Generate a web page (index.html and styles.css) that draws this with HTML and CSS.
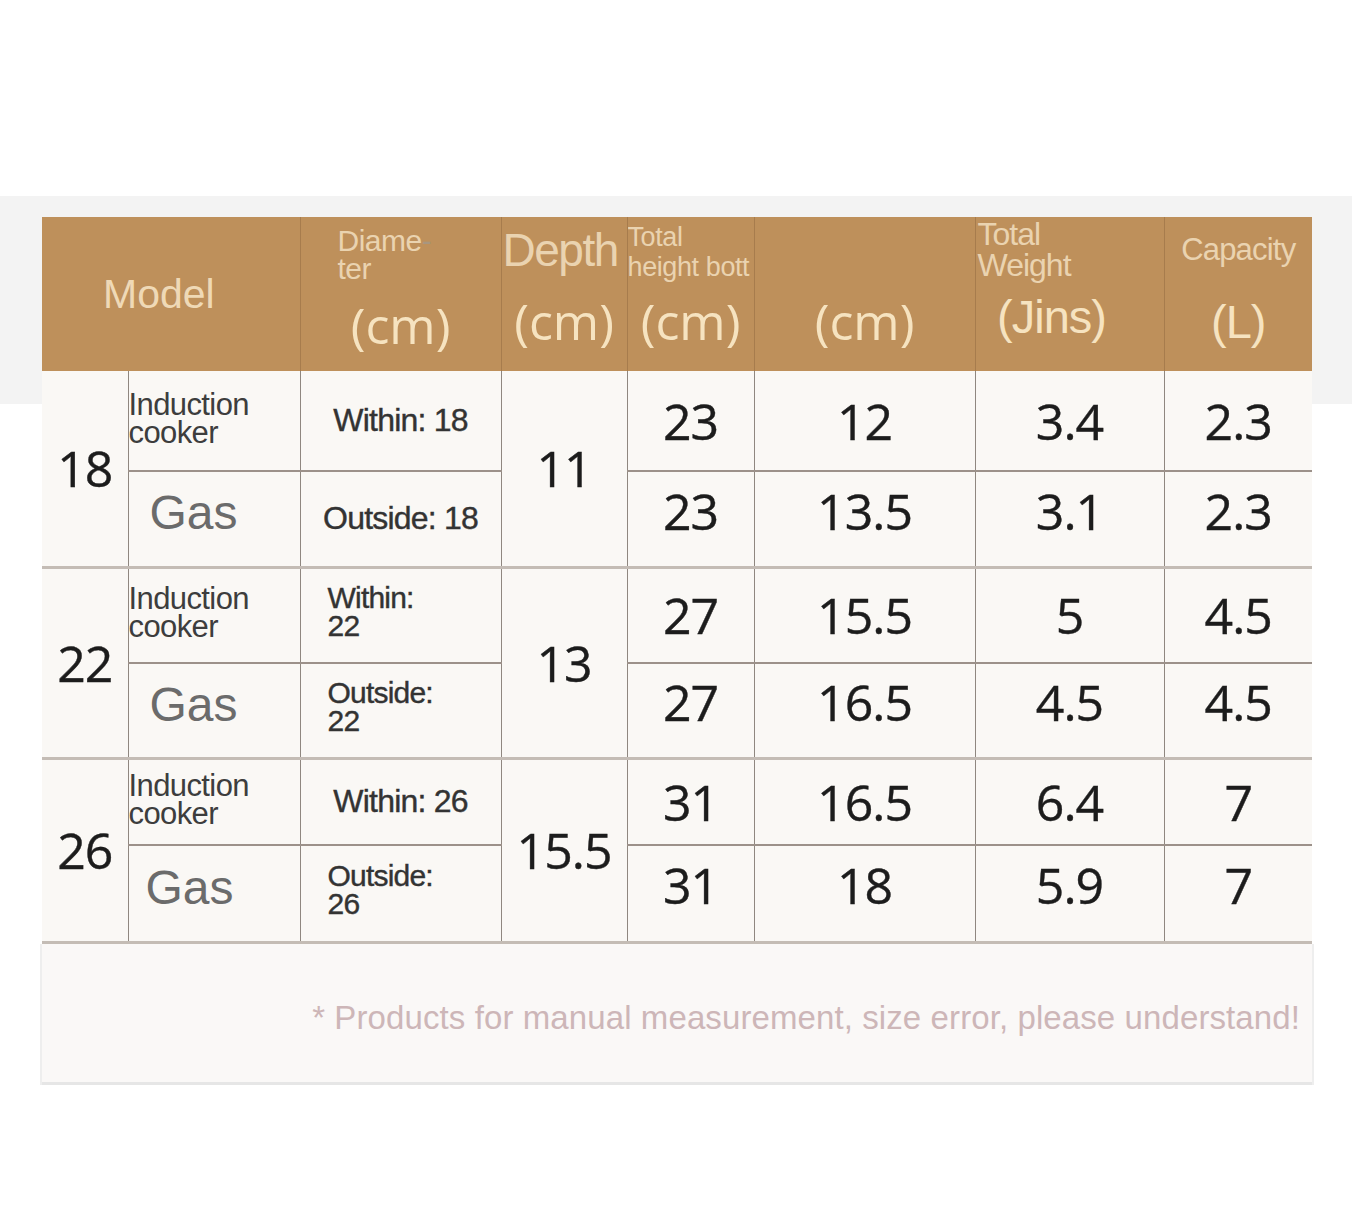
FILE: index.html
```html
<!DOCTYPE html>
<html lang="en">
<head>
<meta charset="utf-8">
<title>Size chart</title>
<link rel="stylesheet" href="styles.css">
</head>
<body>
<main class="sheet">
  <table class="chart">
    <colgroup>
      <col class="c-num"><col class="c-stove"><col class="c-diam"><col class="c-depth">
      <col class="c-total"><col class="c-bottom"><col class="c-weight"><col class="c-cap">
    </colgroup>
    <thead>
      <tr class="head">
        <th colspan="2" class="h-model">Model</th>
        <th class="h-diam"><div class="lbl lbl-diam">Diame<span class="smudge">-</span><br>ter</div><div class="unit">(cm)</div></th>
        <th class="h-depth"><div class="lbl lbl-depth">Depth</div><div class="unit">(cm)</div></th>
        <th class="h-total"><div class="lbl lbl-total">Total<br>height bott</div><div class="unit">(cm)</div></th>
        <th class="h-bottom"><div class="lbl"></div><div class="unit">(cm)</div></th>
        <th class="h-weight"><div class="lbl lbl-weight">Total<br>Weight</div><div class="unit unit-arial unit-jins">(Jins)</div></th>
        <th class="h-cap"><div class="lbl lbl-cap">Capacity</div><div class="unit unit-arial">(L)</div></th>
      </tr>
    </thead>
    <tbody>
      <tr class="row r1">
        <td rowspan="2" class="num model">18</td>
        <td class="stove ind">Induction<br>cooker</td>
        <td class="diam">Within: 18</td>
        <td rowspan="2" class="num depth">11</td>
        <td class="num">23</td><td class="num">12</td><td class="num">3.4</td><td class="num">2.3</td>
      </tr>
      <tr class="row r2 sub">
        <td class="stove gas">Gas</td>
        <td class="diam">Outside: 18</td>
        <td class="num">23</td><td class="num">13.5</td><td class="num">3.1</td><td class="num">2.3</td>
      </tr>
      <tr class="row r3 group">
        <td rowspan="2" class="num model">22</td>
        <td class="stove ind">Induction<br>cooker</td>
        <td class="diam wrap">Within:<br>22</td>
        <td rowspan="2" class="num depth">13</td>
        <td class="num">27</td><td class="num">15.5</td><td class="num">5</td><td class="num">4.5</td>
      </tr>
      <tr class="row r4 sub">
        <td class="stove gas">Gas</td>
        <td class="diam wrap">Outside:<br>22</td>
        <td class="num">27</td><td class="num">16.5</td><td class="num">4.5</td><td class="num">4.5</td>
      </tr>
      <tr class="row r5 group">
        <td rowspan="2" class="num model last">26</td>
        <td class="stove ind ind-l">Induction<br>cooker</td>
        <td class="diam">Within: 26</td>
        <td rowspan="2" class="num depth last">15.5</td>
        <td class="num">31</td><td class="num">16.5</td><td class="num">6.4</td><td class="num">7</td>
      </tr>
      <tr class="row r6 sub">
        <td class="stove gas gas-l">Gas</td>
        <td class="diam wrap">Outside:<br>26</td>
        <td class="num">31</td><td class="num">18</td><td class="num">5.9</td><td class="num">7</td>
      </tr>
    </tbody>
  </table>
  <div class="note">* Products for manual measurement, size error, please understand!</div>
</main>
</body>
</html>
```

FILE: styles.css
```css
html, body {
  margin: 0;
  padding: 0;
}
body {
  width: 1352px;
  height: 1228px;
  background: linear-gradient(to bottom, #ffffff 0, #ffffff 196px, #f3f3f3 196px, #f3f3f3 404px, #ffffff 404px);
  font-family: "Liberation Sans", Arial, sans-serif;
}
.sheet {
  padding: 217px 0 0 42px;
}
.chart {
  width: 1270px;
  table-layout: fixed;
  border-collapse: collapse;
  background: #faf8f5;
}
.c-num { width: 86px; }
.c-stove { width: 172px; }
.c-diam { width: 201px; }
.c-depth { width: 126px; }
.c-total { width: 127px; }
.c-bottom { width: 221px; }
.c-weight { width: 189px; }
.c-cap { width: 148px; }

/* header */
.head th {
  height: 154px;
  padding: 0;
  background: #be905b;
  color: #f3dfbb;
  font-weight: normal;
  vertical-align: top;
  border-left: 1px solid #a77c4d;
  overflow: hidden;
  white-space: nowrap;
}
.head th:first-child { border-left: none; }
.h-model {
  vertical-align: middle !important;
  font-size: 41px;
  text-align: left;
  padding-left: 61px !important;
  color: #efd9b6 !important;
}
.lbl {
  height: 66px;
  display: flex;
  flex-direction: column;
  justify-content: center;
  color: #ead3b0;
  font-size: 30px;
  line-height: 28px;
  text-align: left;
}
.lbl-diam { padding: 10px 0 0 37px; height: 56px; display: block; letter-spacing: -0.5px; }
.smudge { color: #a8967f; }
.lbl-depth { font-size: 46px; line-height: 46px; letter-spacing: -1.5px; padding-left: 1px; }
.lbl-total { font-size: 27px; line-height: 30px; letter-spacing: -0.4px; padding-top: 4px; height: 62px; }
.lbl-weight { font-size: 32px; line-height: 31px; letter-spacing: -1px; padding-left: 2px; height: 64px; padding-top: 2px; justify-content: flex-start; }
.lbl-cap { text-align: center; font-size: 31px; letter-spacing: -0.8px; }
.unit {
  height: 76px;
  display: flex;
  align-items: center;
  justify-content: center;
  font-family: "Open Sans", "Noto Sans", sans-serif;
  font-size: 50px;
  color: #f6e3c0;
}
.h-diam .unit { padding-top: 4px; }
.unit-arial {
  font-family: "Liberation Sans", Arial, sans-serif;
  font-size: 47px;
  letter-spacing: -1px;
}
.h-weight .unit { height: 66px; }
.unit-jins { padding-right: 36px; }

/* body */
.row td {
  padding: 0;
  border-left: 1px solid #8f8780;
  vertical-align: middle;
  text-align: center;
}
.row td.model { border-left: none; }
.r1 { height: 100px; }
.r2 { height: 96px; }
.r3 { height: 96px; }
.r4 { height: 95px; }
.r5 { height: 87px; }
.r6 { height: 97px; }
.sub td { border-top: 2px solid #9c918a; }
.group td { border-top: 3px solid #c4bcb5; }
.r6 td, .row td.last { border-bottom: 3px solid #c4bcb5; }

.num {
  font-family: "Open Sans", "Noto Sans", sans-serif;
  font-size: 50px;
  color: #1c1c1c;
  letter-spacing: -1px;
  -webkit-text-stroke: 0.4px #1c1c1c;
}
.sub .num { padding-bottom: 16px !important; }
.stove {
  text-align: left !important;
  color: #3d3d3d;
}
.ind {
  font-size: 31px;
  line-height: 28px;
  letter-spacing: -0.6px;
  padding-bottom: 4px !important;
}
.gas {
  font-size: 48px;
  color: #6b6b6b;
  padding-left: 21px !important;
  padding-bottom: 12px !important;
}
.gas-l { padding-left: 17px !important; }
.diam {
  font-size: 32px;
  letter-spacing: -0.8px;
  color: #333333;
  -webkit-text-stroke: 0.4px #333333;
}
.diam.wrap {
  text-align: left !important;
  padding-left: 27px !important;
  line-height: 28px;
  font-size: 30px;
  padding-bottom: 6px !important;
}

/* note */
.note {
  width: 1258px;
  height: 128px;
  padding: 10px 12px 0 0;
  background: #faf8f7;
  border-bottom: 3px solid #e6e6e6;
  box-shadow: -2px 0 0 #eeeeee, 2px 0 0 #eeeeee;
  display: flex;
  align-items: center;
  justify-content: flex-end;
  font-size: 33px;
  letter-spacing: 0.1px;
  color: #cdb6b8;
}
```
